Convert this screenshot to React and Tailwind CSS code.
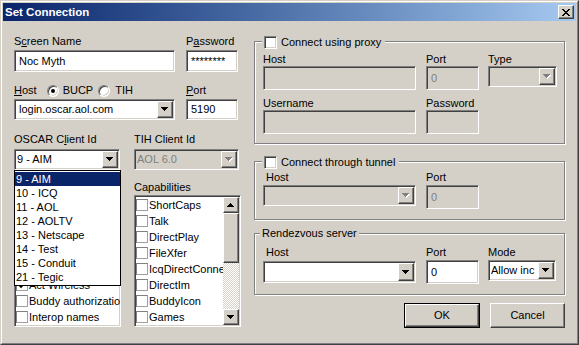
import React from "react";

const SUNKEN =
  "border border-t-[#808080] border-l-[#808080] border-r-white border-b-white shadow-[inset_1px_1px_0_#404040,inset_-1px_-1px_0_#d4d0c8]";
const RAISED =
  "border border-t-white border-l-white border-r-[#404040] border-b-[#404040] shadow-[inset_-1px_-1px_0_#808080] bg-[#d4d0c8]";

function Arrow({ up = false, color = "#000", shadow = false }) {
  const rows = up
    ? [[3, 1], [2, 3], [1, 5], [0, 7]]
    : [[0, 7], [1, 5], [2, 3], [3, 1]];
  return (
    <svg width="8" height="5" viewBox="0 0 8 5" shapeRendering="crispEdges">
      {shadow &&
        rows.map(([x, w], i) => (
          <rect key={"s" + i} x={x + 1} y={i + 1} width={w} height={1} fill="#fff" />
        ))}
      {rows.map(([x, w], i) => (
        <rect key={i} x={x} y={i} width={w} height={1} fill={color} />
      ))}
    </svg>
  );
}

function Label({ children }) {
  return <div className="h-[13px] leading-[13px] whitespace-nowrap">{children}</div>;
}

function Edit({ className = "", text = "", disabled = false }) {
  return (
    <div
      className={`${SUNKEN} flex items-center pl-[4px] whitespace-nowrap overflow-hidden ${
        disabled ? "bg-[#d4d0c8] text-[#808080]" : "bg-white text-black"
      } ${className}`}
    >
      {text}
    </div>
  );
}

function Combo({ className = "", text = "", disabled = false, pl = "pl-[2px]" }) {
  return (
    <div
      className={`${SUNKEN} p-px flex ${
        disabled ? "bg-[#d4d0c8] text-[#808080]" : "bg-white text-black"
      } ${className}`}
    >
      <div className={`flex-1 flex items-center overflow-hidden whitespace-nowrap ${pl}`}>{text}</div>
      <div className={`${RAISED} w-[16px] flex items-center justify-center shrink-0`}>
        <Arrow color={disabled ? "#808080" : "#000"} shadow={disabled} />
      </div>
    </div>
  );
}

function Check3D() {
  return <div className={`${SUNKEN} w-[13px] h-[13px] bg-white shrink-0`} />;
}

function FlatCheck({ checked = false }) {
  return (
    <div className="w-[12px] h-[12px] border border-t-[#808080] border-l-[#808080] border-r-[#a0a0a0] border-b-[#a0a0a0] bg-white shrink-0 flex items-center justify-center">
      {checked && (
        <svg width="8" height="8" viewBox="0 0 8 8">
          <polyline points="0.8,3.6 3,5.8 7.2,1.4" fill="none" stroke="#000" strokeWidth="1.9" />
        </svg>
      )}
    </div>
  );
}

function ListItem({ text, checked }) {
  return (
    <div className="h-[16px] flex items-center whitespace-nowrap">
      <FlatCheck checked={checked} />
      {text ? <span className="pl-[1px]">{text}</span> : null}
    </div>
  );
}

function Radio({ checked = false }) {
  return (
    <div className="w-[12px] h-[12px] rounded-full border border-t-[#808080] border-l-[#808080] border-r-white border-b-white bg-white shadow-[inset_1px_1px_0_#404040,inset_-1px_-1px_0_#d4d0c8] flex items-center justify-center shrink-0">
      {checked && <div className="w-[4px] h-[4px] rounded-full bg-black" />}
    </div>
  );
}

function Group({ legend, className = "", children }) {
  return (
    <div className={`relative border border-[#808080] shadow-[1px_1px_0_#fff,inset_1px_1px_0_#fff] ${className}`}>
      {legend}
      {children}
    </div>
  );
}

function Button({ children, def = false, className = "" }) {
  if (def) {
    return (
      <div className={`border border-black flex ${className}`}>
        <div className={`${RAISED} flex-1 flex items-center justify-center`}>{children}</div>
      </div>
    );
  }
  return <div className={`${RAISED} flex items-center justify-center ${className}`}>{children}</div>;
}

const oscarIds = [
  "9 - AIM",
  "10 - ICQ",
  "11 - AOL",
  "12 - AOLTV",
  "13 - Netscape",
  "14 - Test",
  "15 - Conduit",
  "21 - Tegic",
];

// rows hidden under the open drop-down list carry no visible text
const flags = [
  ["", false],
  ["", false],
  ["", false],
  ["", false],
  ["", false],
  ["Act Wireless", true],
  ["Buddy authorization", false],
  ["Interop names", false],
];

const caps = [
  "ShortCaps",
  "Talk",
  "DirectPlay",
  "FileXfer",
  "IcqDirectConnect",
  "DirectIm",
  "BuddyIcon",
  "Games",
];

export default function App() {
  return (
    <div className="w-[579px] h-[345px] font-['Liberation_Sans',Arial,sans-serif] text-[11px] leading-[13px] text-black">
      <div className="w-full h-full border border-t-[#d4d0c8] border-l-[#d4d0c8] border-r-[#404040] border-b-[#404040]">
        <div className="w-full h-full border border-t-white border-l-white border-r-[#808080] border-b-[#808080] bg-[#d4d0c8] p-px flex flex-col">
          {/* Title bar */}
          <div className="h-[18px] shrink-0 bg-linear-to-r from-[#0a246a] to-[#a6caf0] flex items-center justify-between pl-[2px] pr-[2px]">
            <span className="text-white font-bold text-[11.5px] leading-[18px] whitespace-nowrap">Set Connection</span>
            <div className={`${RAISED} w-[16px] h-[14px] flex items-center justify-center`}>
              <svg width="8" height="7" viewBox="0 0 8 7" shapeRendering="crispEdges">
                <path d="M0 0h2v1h1v1h2v-1h1v-1h2v1h-1v1h-1v1h-1v1h1v1h1v1h1v1h-2v-1h-1v-1h-2v1h-1v1h-2v-1h1v-1h1v-1h1v-1h-1v-1h-1v-1h-1z" fill="#000" />
              </svg>
            </div>
          </div>

          {/* Body */}
          <div className="flex pl-[11px]">
            {/* Left column */}
            <div className="w-[227px] mt-[14px] shrink-0">
              {/* Row 1 */}
              <div className="flex">
                <div className="w-[161px]">
                  <Label>
                    S<span className="underline">c</span>reen Name
                  </Label>
                  <Edit className="mt-[2px] h-[22px]" text="Noc Myth" />
                </div>
                <div className="w-[52px] ml-[11px]">
                  <Label>
                    P<span className="underline">a</span>ssword
                  </Label>
                  <Edit className="mt-[2px] h-[22px]" text="********" />
                </div>
              </div>

              {/* Row 2 */}
              <div className="flex mt-[12px]">
                <div className="w-[161px]">
                  <div className="h-[13px] flex items-center whitespace-nowrap">
                    <span>
                      <span className="underline">H</span>ost
                    </span>
                    <div className="ml-[10px] flex items-center gap-[4px]">
                      <Radio checked />
                      <span>BUCP</span>
                    </div>
                    <div className="ml-[5px] flex items-center gap-[5px]">
                      <Radio />
                      <span>TIH</span>
                    </div>
                  </div>
                  <Combo className="mt-[2px] h-[21px]" text="login.oscar.aol.com" pl="pl-[3px]" />
                </div>
                <div className="w-[52px] ml-[11px]">
                  <Label>
                    <span className="underline">P</span>ort
                  </Label>
                  <Edit className="mt-[2px] h-[21px]" text="5190" />
                </div>
              </div>

              {/* Row 3 */}
              <div className="flex mt-[13px]">
                <div className="w-[106px]">
                  <Label>
                    OSCAR C<span className="underline">l</span>ient Id
                  </Label>
                  <div className="relative mt-[3px]">
                    <Combo className="h-[21px]" text="9 - AIM" pl="pl-[1px]" />
                    <div className="absolute left-0 top-full w-[107px] border border-black bg-white z-10 py-px">
                      {oscarIds.map((t, i) => (
                        <div
                          key={t}
                          className={`h-[14px] leading-[14px] pl-[1px] whitespace-nowrap ${
                            i === 0 ? "bg-[#0a246a] text-white" : ""
                          }`}
                        >
                          {t}
                        </div>
                      ))}
                    </div>
                  </div>
                </div>
                <div className="w-[105px] ml-[14px]">
                  <Label>TIH Client Id</Label>
                  <Combo className="mt-[3px] h-[21px]" text="AOL 6.0" disabled pl="pl-[1px]" />
                </div>
              </div>

              {/* Row 4 */}
              <div className="flex mt-[11px]">
                <div className="w-[107px]">
                  <div className="h-[13px]" />
                  <div className={`${SUNKEN} bg-white mt-px h-[132px] p-px overflow-hidden`}>
                    {flags.map(([t, c], i) => (
                      <ListItem key={i} text={t} checked={c} />
                    ))}
                  </div>
                </div>
                <div className="w-[107px] ml-[13px]">
                  <Label>Capabilities</Label>
                  <div className={`${SUNKEN} bg-white mt-px h-[132px] p-px flex`}>
                    <div className="flex-1 overflow-hidden">
                      {caps.map((t) => (
                        <ListItem key={t} text={t} />
                      ))}
                    </div>
                    <div className="w-[16px] flex flex-col shrink-0">
                      <div className={`${RAISED} h-[16px] flex items-center justify-center`}>
                        <Arrow up />
                      </div>
                      <div className={`${RAISED} h-[50px]`} />
                      <div className="flex-1 bg-[image:repeating-conic-gradient(#d4d0c8_0%_25%,#ffffff_0%_50%)] bg-[length:2px_2px]" />
                      <div className={`${RAISED} h-[16px] flex items-center justify-center`}>
                        <Arrow />
                      </div>
                    </div>
                  </div>
                </div>
              </div>
            </div>

            {/* Right column */}
            <div className="w-[311px] ml-[13px] mt-[20px] shrink-0">
              <Group
                legend={
                  <div className="absolute left-[7px] top-[-6px] bg-[#d4d0c8] pl-[2px] pr-[4px] flex items-center gap-[4px] whitespace-nowrap">
                    <Check3D />
                    <span>Connect using proxy</span>
                  </div>
                }
              >
                <div className="pl-[8px] pt-[11px] pb-[9px]">
                  <div className="flex">
                    <div className="w-[153px]">
                      <Label>Host</Label>
                      <Edit disabled className="h-[24px]" />
                    </div>
                    <div className="w-[53px] ml-[10px]">
                      <Label>Port</Label>
                      <Edit disabled className="h-[24px]" text="0" />
                    </div>
                    <div className="w-[69px] ml-[9px]">
                      <Label>Type</Label>
                      <Combo disabled className="h-[21px]" />
                    </div>
                  </div>
                  <div className="flex mt-[7px]">
                    <div className="w-[153px]">
                      <Label>Username</Label>
                      <Edit disabled className="h-[24px]" />
                    </div>
                    <div className="w-[53px] ml-[10px]">
                      <Label>Password</Label>
                      <Edit disabled className="h-[24px]" />
                    </div>
                  </div>
                </div>
              </Group>

              <Group
                className="mt-[17px]"
                legend={
                  <div className="absolute left-[7px] top-[-6px] bg-[#d4d0c8] pl-[2px] pr-[4px] flex items-center gap-[4px] whitespace-nowrap">
                    <Check3D />
                    <span>Connect through tunnel</span>
                  </div>
                }
              >
                <div className="pl-[8px] pt-[9px] pb-[10px]">
                  <div className="flex">
                    <div className="w-[153px]">
                      <Label>&nbsp;Host</Label>
                      <Combo disabled className="mt-px h-[21px]" />
                    </div>
                    <div className="w-[53px] ml-[10px]">
                      <Label>Port</Label>
                      <Edit disabled className="mt-px h-[24px]" text="0" />
                    </div>
                  </div>
                </div>
              </Group>

              <Group
                className="mt-[13px]"
                legend={
                  <div className="absolute left-[5px] top-[-7px] bg-[#d4d0c8] px-[2px] whitespace-nowrap h-[13px] leading-[13px]">
                    Rendezvous server
                  </div>
                }
              >
                <div className="pl-[8px] pt-[12px] pb-[10px]">
                  <div className="flex">
                    <div className="w-[153px]">
                      <Label>&nbsp;Host</Label>
                      <Combo className="mt-[2px] h-[22px]" />
                    </div>
                    <div className="w-[53px] ml-[10px]">
                      <Label>Port</Label>
                      <Edit className="mt-px h-[24px]" text="0" />
                    </div>
                    <div className="w-[68px] ml-[9px]">
                      <Label>Mode</Label>
                      <Combo className="mt-px h-[21px]" text="Allow inc" pl="pl-[1px]" />
                    </div>
                  </div>
                </div>
              </Group>

              <div className="flex justify-end gap-[10px] mt-[8px]">
                <Button def className="w-[76px] h-[25px]">OK</Button>
                <Button className="w-[75px] h-[25px]">Cancel</Button>
              </div>
            </div>
          </div>
        </div>
      </div>
    </div>
  );
}
